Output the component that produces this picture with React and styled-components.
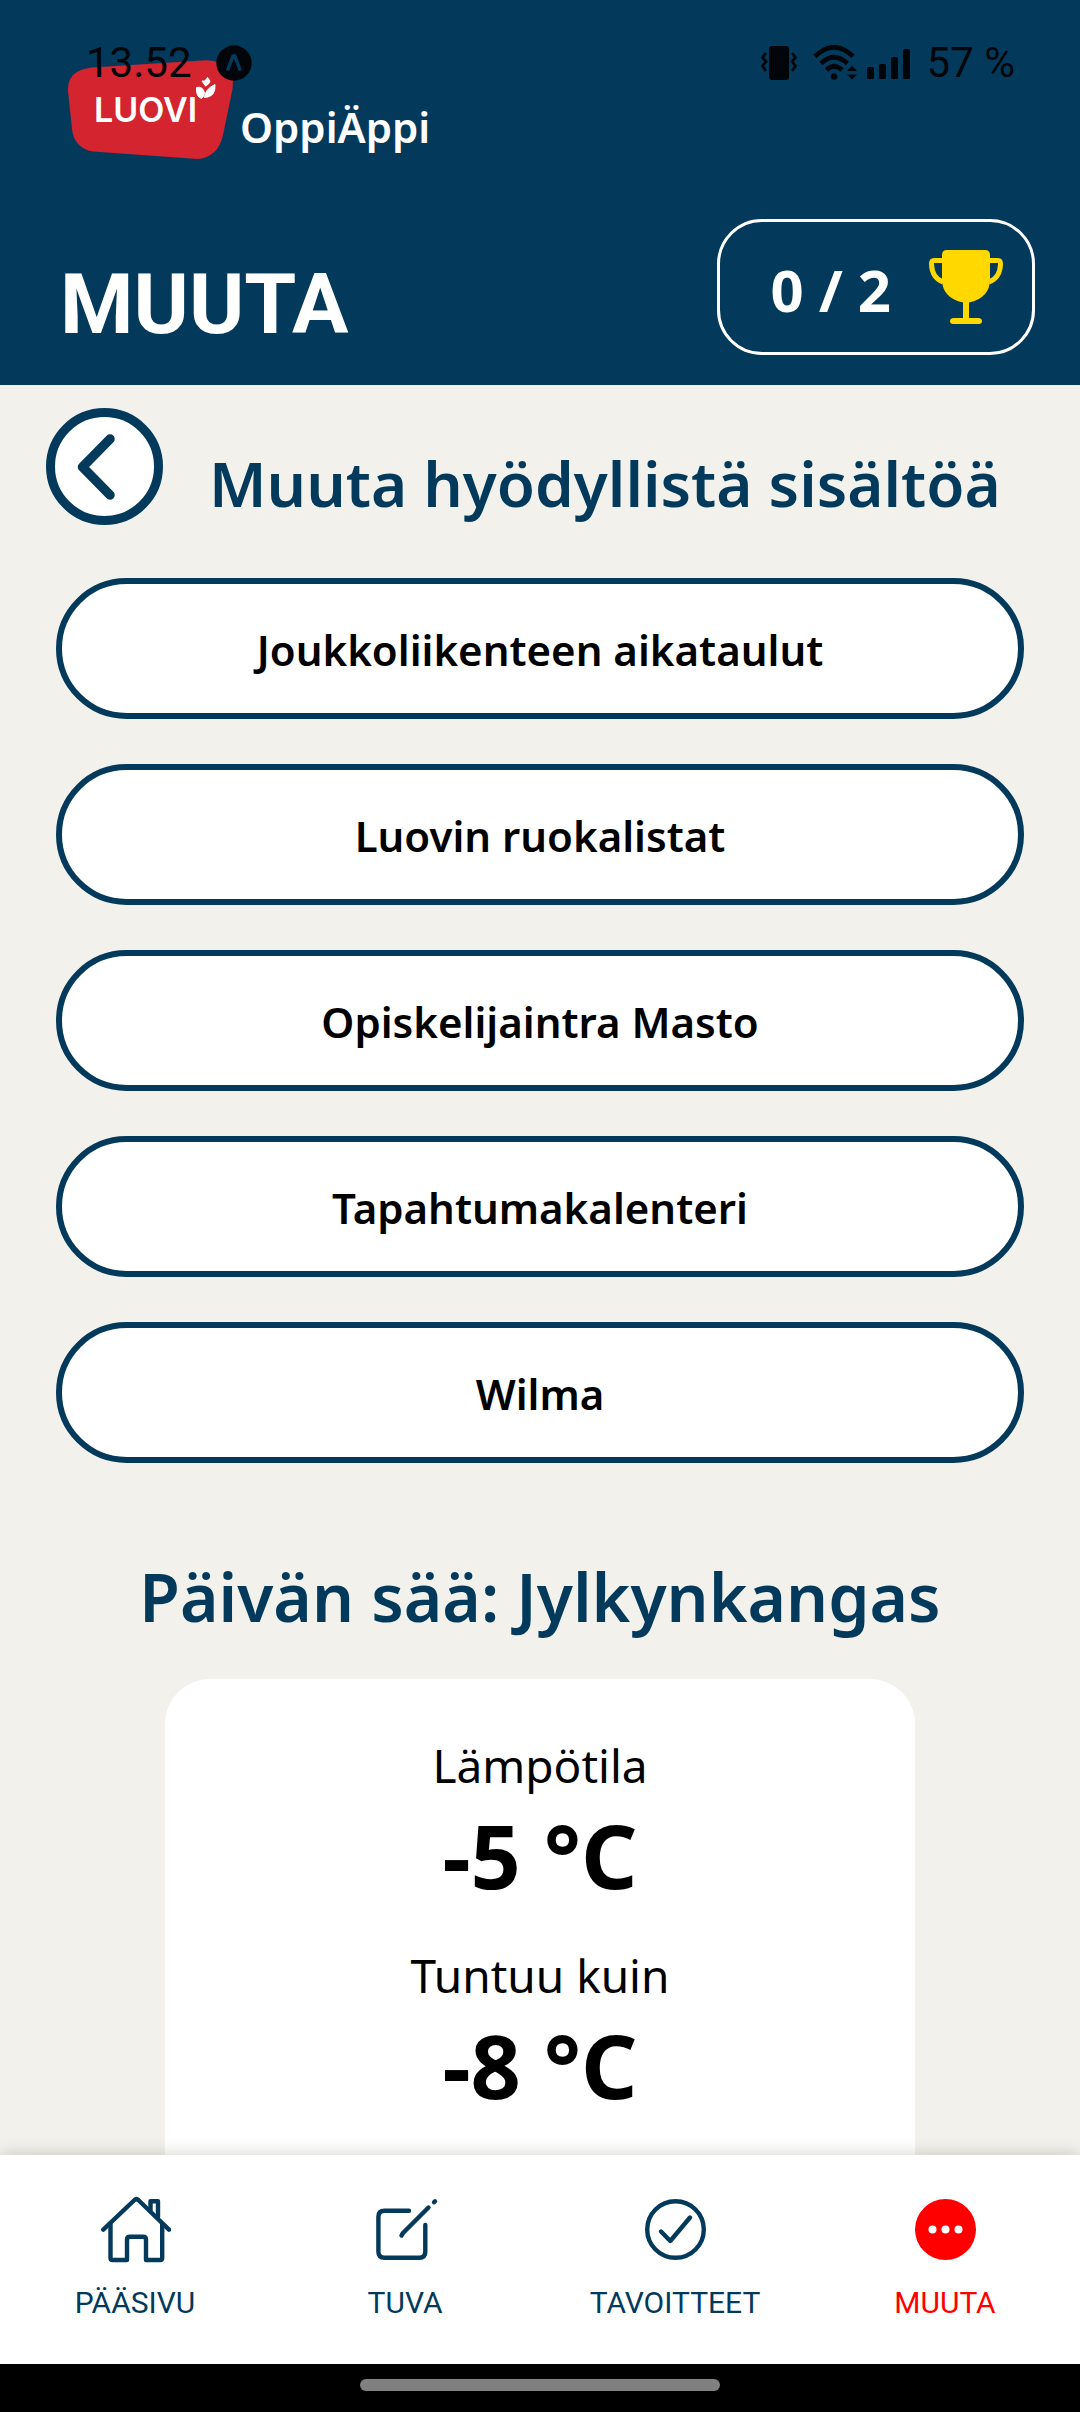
import React from "react";
import styled, { createGlobalStyle } from "styled-components";

const navy = "#033a5c";
const sand = "#f2f1ec";
const humanist = '"Noto Sans", "Open Sans", sans-serif';
const grotesque = 'Roboto, "Liberation Sans", sans-serif';

const GlobalStyle = createGlobalStyle`
  *, *::before, *::after { box-sizing: border-box; }
  body { margin: 0; background: ${sand}; }
  h1, h2, p, dl, dt, dd, ul { margin: 0; padding: 0; }
`;

const Screen = styled.div`
  position: relative;
  display: flex;
  flex-direction: column;
  height: 100vh;
  background: ${sand};
  font-family: ${humanist};
  color: #000;
`;

const StatusBar = styled.div`
  position: absolute;
  inset: 0 0 auto 0;
  display: flex;
  justify-content: space-between;
  padding: 38px 65px 0 86px;
  font: 400 42px/50px ${grotesque};
  color: #02060a;
`;

const StatusGroup = styled.div`
  display: flex;
  align-items: center;
  gap: ${(p) => p.$gap}px;
`;

const Header = styled.header`
  flex: none;
  padding: 60px 45px 30px 60px;
  background: ${navy};
  color: #fff;
`;

const Brand = styled.div`
  display: flex;
  align-items: center;
  gap: 6px;
  height: 100px;
  padding-left: 7px;
`;

const BrandName = styled.span`
  padding-top: 34px;
  font-size: 42px;
  font-weight: 600;
  line-height: 60px;
`;

const TitleRow = styled.div`
  display: flex;
  align-items: flex-end;
  justify-content: space-between;
  margin-top: 59px;
`;

const ScreenTitle = styled.h1`
  font: 700 84px/100px ${grotesque};
`;

const Score = styled.div`
  display: flex;
  align-items: center;
  gap: 38px;
  height: 136px;
  padding: 0 29px 0 50px;
  border: 3px solid #fff;
  border-radius: 45px;
  font-size: 58px;
  font-weight: 700;
  line-height: 72px;
`;

const ScoreText = styled.span`
  padding-top: 6px;
`;

const Content = styled.main`
  flex: 1;
  min-height: 0;
  overflow-y: auto;
  scrollbar-width: none;
  padding: 23px 56px 48px;
`;

const HeadingRow = styled.div`
  display: flex;
  align-items: flex-end;
  gap: 46px;
  margin-left: -10px;
`;

const BackButton = styled.button`
  flex: none;
  display: grid;
  place-items: center;
  width: 117px;
  height: 117px;
  padding: 0;
  border: 9px solid ${navy};
  border-radius: 50%;
  background: #fff;
`;

const Heading = styled.h2`
  font-size: ${(p) => p.$size}px;
  font-weight: 600;
  line-height: 84px;
  color: ${navy};
  white-space: nowrap;
`;

const LinkList = styled.nav`
  display: flex;
  flex-direction: column;
  gap: 45px;
  margin: 53px 0 91px;
`;

const PillLink = styled.a`
  display: flex;
  align-items: center;
  justify-content: center;
  height: 141px;
  padding-top: 2px;
  border: 6px solid ${navy};
  border-radius: 71px;
  background: #fff;
  color: #000;
  font-size: 42px;
  font-weight: 600;
  text-decoration: none;
`;

const Weather = styled.section`
  display: flex;
  flex-direction: column;
  align-items: center;
`;

const WeatherCard = styled.dl`
  display: flex;
  flex-direction: column;
  gap: 30px;
  width: 77.5%;
  margin-top: 41px;
  padding: 56px 0 120px;
  border-radius: 45px;
  background: #fff;
  text-align: center;
`;

const ReadingName = styled.dt`
  font-size: 46px;
  line-height: 60px;
`;

const ReadingValue = styled.dd`
  font-size: 88px;
  font-weight: 700;
  line-height: 120px;
`;

const TabBar = styled.nav`
  position: relative;
  flex: none;
  display: grid;
  grid-template-columns: repeat(4, 1fr);
  padding: 39px 0 43px;
  background: #fff;
  box-shadow: 0 0 16px rgba(40, 40, 20, 0.22);
`;

const Tab = styled.a`
  display: flex;
  flex-direction: column;
  align-items: center;
  gap: 19px;
  font: 400 30px/36px ${grotesque};
  color: ${(p) => (p.$active ? "#f00" : navy)};
  text-decoration: none;
`;

const GestureBar = styled.div`
  position: relative;
  flex: none;
  display: flex;
  justify-content: center;
  padding: 15px 0 21px;
  background: #000;

  &::before {
    content: "";
    width: 33.333%;
    height: 12px;
    border-radius: 6px;
    background: #808080;
  }
`;

const LuoviLogo = () => (
  <svg width="167" height="100" viewBox="0 0 167 100" role="img" aria-label="Luovi">
    <path
      d="M25 7.500L139 .2Q154 0 163 11Q167 17 165.500 29L156 75Q151 97 131 99L26 91.500Q7 88 5 69L1 31Q0 10 25 7.500Z"
      fill="#d3242f"
    />
    <text x="27" y="62" fontFamily="Inter, sans-serif" fontSize="34" fontWeight="600" fill="#fff">
      LUOVI
    </text>
    <path
      d="M129.500 27.500Q136 26 137.500 33Q137 37 134.500 38.500Q129 37 129.500 27.500Z M137.500 37.500Q138 29 148 24.500Q149 37 137.500 37.500Z M135 21L138 21L140.500 17.500L143 21L141.500 24L138.500 26Z"
      fill="#fff"
      stroke="#fff"
      strokeWidth="1"
    />
  </svg>
);

const AppBadge = () => (
  <svg width="36" height="36" viewBox="0 0 36 36" aria-hidden="true">
    <circle cx="18" cy="18" r="17.700" fill="#02060a" />
    <path d="M11.500 25.500L17 11H18.800L24.300 25.500" fill="none" stroke={navy} strokeWidth="3.400" />
  </svg>
);

const VibrateIcon = () => (
  <svg width="36" height="36" viewBox="0 0 36 36" aria-hidden="true">
    <rect x="8" y="1" width="20" height="34" rx="3" fill="currentColor" />
    <path
      d="M5 8L1.500 12.500L5 16.500L1.500 21L5 26M31 8L34.500 12.500L31 16.500L34.500 21L31 26"
      fill="none"
      stroke="currentColor"
      strokeWidth="2.800"
    />
  </svg>
);

const WifiIcon = () => (
  <svg width="46" height="36" viewBox="0 0 46 36" aria-hidden="true">
    <g fill="none" stroke="currentColor" strokeWidth="4.600">
      <path d="M2 11.500Q21 -7 40 11.500" />
      <path d="M8 18.500Q21 6 34.500 18.500" />
      <path d="M13.500 25Q21 17.500 29 25" />
    </g>
    <circle cx="21" cy="31.500" r="3.300" fill="currentColor" />
    <path d="M34 26L39 20.500L44 26ZM34 29.500H44L39 34.500Z" fill="currentColor" />
  </svg>
);

const SignalIcon = () => (
  <svg width="44" height="36" viewBox="0 0 44 36" fill="currentColor" aria-hidden="true">
    <rect x="0" y="22" width="7" height="12" rx="1.500" />
    <rect x="12" y="19" width="7" height="15" rx="1.500" />
    <rect x="24" y="12" width="7" height="22" rx="1.500" />
    <rect x="36" y="4" width="7" height="30" rx="1.500" />
  </svg>
);

const TrophyIcon = () => (
  <svg width="74" height="74" viewBox="0 0 74 74" aria-hidden="true">
    <path
      d="M18 0H56Q61 0 61 5V29Q61 48 40 52.500V68H50Q53 68.500 53 71Q53 74 50 74H24Q21 74 21 71Q21 68.500 24 68H34V52.500Q13 48 13 29V5Q13 0 18 0Z"
      fill="#ffd800"
    />
    <path
      d="M14 10.500H5Q2.500 10.500 2.500 14Q3 28 14 32M60 10.500H69Q71.500 10.500 71.500 14Q71 28 60 32"
      fill="none"
      stroke="#ffd800"
      strokeWidth="5"
    />
  </svg>
);

const BackIcon = () => (
  <svg width="99" height="99" viewBox="0 0 99 99" aria-hidden="true">
    <path
      d="M55 22L27.500 50L55 78"
      fill="none"
      stroke={navy}
      strokeWidth="9.500"
      strokeLinecap="round"
      strokeLinejoin="round"
    />
  </svg>
);

const TabIcon = ({ children }) => (
  <svg
    width="72"
    height="72"
    viewBox="0 0 72 72"
    fill="none"
    stroke="currentColor"
    strokeWidth="4.400"
    strokeLinecap="round"
    strokeLinejoin="round"
    aria-hidden="true"
  >
    {children}
  </svg>
);

const HomeIcon = () => (
  <TabIcon>
    <path d="M4.300 35.700L35.500 6Q37.400 4.300 39.300 6L70 35.700" />
    <path d="M11.500 30V64Q11.500 66 13.500 66H28V45.500Q28 42.700 31 42.700H44Q47 42.700 47 45.500V66H61.200Q63.200 66 63.200 64V30" />
    <path d="M51.500 17V7.200H59V23" />
  </TabIcon>
);

const EditIcon = () => (
  <TabIcon>
    <path d="M40 16.700H15.500Q9.400 16.700 9.400 22.700V57.700Q9.400 63.700 15.500 63.700H50.300Q56.300 63.700 56.300 57.700V31" />
    <path d="M59.500 13.500L34 39L32.500 41.500M65 8.300L66 7.300" />
  </TabIcon>
);

const CheckIcon = () => (
  <TabIcon>
    <circle cx="36.500" cy="35.500" r="28.300" />
    <path d="M22 37.500L31.300 47L51 23.500" />
  </TabIcon>
);

const MoreIcon = () => (
  <TabIcon>
    <circle cx="36.500" cy="35.500" r="30.500" fill="currentColor" stroke="none" />
    <g fill="#fff" stroke="none">
      <circle cx="23.500" cy="35.500" r="4" />
      <circle cx="36.500" cy="35.500" r="4" />
      <circle cx="49.500" cy="35.500" r="4" />
    </g>
  </TabIcon>
);

const links = [
  "Joukkoliikenteen aikataulut",
  "Luovin ruokalistat",
  "Opiskelijaintra Masto",
  "Tapahtumakalenteri",
  "Wilma",
];

const readings = [
  { name: "Lämpötila", value: "-5 °C" },
  { name: "Tuntuu kuin", value: "-8 °C" },
];

const tabs = [
  { label: "PÄÄSIVU", Icon: HomeIcon },
  { label: "TUVA", Icon: EditIcon },
  { label: "TAVOITTEET", Icon: CheckIcon },
  { label: "MUUTA", Icon: MoreIcon, active: true },
];

export default function App() {
  return (
    <Screen>
      <GlobalStyle />
      <Header>
        <Brand>
          <LuoviLogo />
          <BrandName>OppiÄppi</BrandName>
        </Brand>
        <TitleRow>
          <ScreenTitle>MUUTA</ScreenTitle>
          <Score>
            <ScoreText>0 / 2</ScoreText>
            <TrophyIcon />
          </Score>
        </TitleRow>
      </Header>
      <StatusBar>
        <StatusGroup $gap={24}>
          <span>13.52</span>
          <AppBadge />
        </StatusGroup>
        <StatusGroup $gap={16}>
          <VibrateIcon />
          <StatusGroup $gap={8}>
            <WifiIcon />
            <SignalIcon />
          </StatusGroup>
          <span>57 %</span>
        </StatusGroup>
      </StatusBar>
      <Content>
        <HeadingRow>
          <BackButton type="button" aria-label="Takaisin">
            <BackIcon />
          </BackButton>
          <Heading $size={62}>Muuta hyödyllistä sisältöä</Heading>
        </HeadingRow>
        <LinkList>
          {links.map((label) => (
            <PillLink key={label} href="#">
              {label}
            </PillLink>
          ))}
        </LinkList>
        <Weather>
          <Heading $size={66}>Päivän sää: Jylkynkangas</Heading>
          <WeatherCard>
            {readings.map(({ name, value }) => (
              <div key={name}>
                <ReadingName>{name}</ReadingName>
                <ReadingValue>{value}</ReadingValue>
              </div>
            ))}
          </WeatherCard>
        </Weather>
      </Content>
      <TabBar>
        {tabs.map(({ label, Icon, active }) => (
          <Tab key={label} href="#" $active={active} aria-current={active ? "page" : undefined}>
            <Icon />
            {label}
          </Tab>
        ))}
      </TabBar>
      <GestureBar />
    </Screen>
  );
}
